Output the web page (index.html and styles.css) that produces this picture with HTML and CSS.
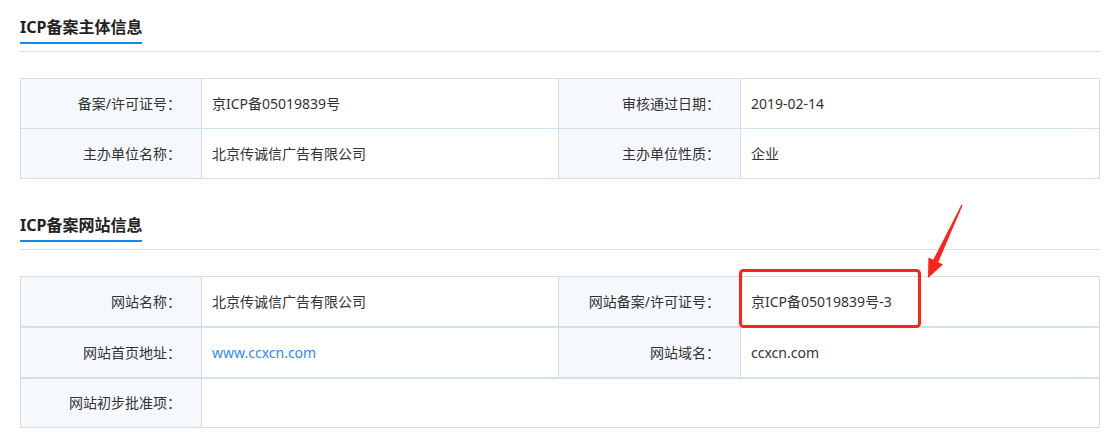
FILE: index.html
```html
<!DOCTYPE html>
<html lang="zh-CN">
<head>
<meta charset="utf-8">
<title>ICP备案信息</title>
<link rel="stylesheet" href="styles.css">
</head>
<body>
<div class="page">
  <section class="section first">
    <div class="sec-head"><h3 class="sec-title">ICP备案主体信息</h3></div>
    <div class="info-table t1">
      <div class="cell label">备案/许可证号：</div>
      <div class="cell value">京ICP备05019839号</div>
      <div class="cell label">审核通过日期：</div>
      <div class="cell value last">2019-02-14</div>
      <div class="cell label">主办单位名称：</div>
      <div class="cell value">北京传诚信广告有限公司</div>
      <div class="cell label">主办单位性质：</div>
      <div class="cell value last">企业</div>
    </div>
  </section>
  <section class="section second">
    <div class="sec-head"><h3 class="sec-title">ICP备案网站信息</h3></div>
    <div class="info-table t2">
      <div class="cell label">网站名称：</div>
      <div class="cell value">北京传诚信广告有限公司</div>
      <div class="cell label">网站备案/许可证号：</div>
      <div class="cell value last">京ICP备05019839号-3</div>
      <div class="cell label">网站首页地址：</div>
      <div class="cell value"><a class="link" href="#">www.ccxcn.com</a></div>
      <div class="cell label">网站域名：</div>
      <div class="cell value last">ccxcn.com</div>
      <div class="cell label end">网站初步批准项：</div>
      <div class="cell value span3 end last"></div>
    </div>
  </section>
</div>
<svg class="annot" width="1113" height="437" viewBox="0 0 1113 437" xmlns="http://www.w3.org/2000/svg">
  <rect x="740.5" y="270.5" width="179" height="56" rx="3" ry="3" fill="none" stroke="#ff2418" stroke-width="3"/>
  <polygon points="961.5,204.6 962.6,205.3 938.2,262.3 943,264.6 928,278 928.4,257.4 933.3,259.8" fill="#ff2418"/>
</svg>
</body>
</html>
```

FILE: styles.css
```css
* { box-sizing: border-box; }
html, body { margin: 0; padding: 0; background: #fff; }
body {
  font-family: "Noto Sans", "Noto Sans CJK SC", sans-serif;
  font-size: 14px;
  color: #333;
  position: relative;
  width: 1113px;
  height: 437px;
  overflow: hidden;
}
.page { padding: 15px 13px 0 20px; }
.section.second { margin-top: 34px; }
.sec-head {
  border-bottom: 1px solid #d6e3ee;
  padding-bottom: 7px;
  margin-bottom: 26px;
}
.sec-title {
  display: inline-block;
  margin: 0;
  font-size: 16px;
  font-weight: bold;
  line-height: 24px;
  color: #222;
  padding-bottom: 3px;
  border-bottom: 2px solid #1589ea;
  font-family: "Noto Sans", "Noto Sans CJK SC", sans-serif;
}
.info-table {
  display: grid;
  grid-template-columns: 181px 357px 182px 1fr;
  border: 1px solid #dcdcdc;
  border-bottom: none;
  width: 1080px;
}
.cell {
  display: flex;
  align-items: center;
  height: 50px;
  border-right: 1px solid #dcdcdc;
  border-bottom: 1px solid #d0e1ef;
  line-height: 20px;
  white-space: nowrap;
}
.cell.last { border-right: none; }
.label {
  background: #f5f9fd;
  justify-content: flex-end;
  padding-right: 20px;
}
.value { padding-left: 10px; }
.t2 .cell { height: 51px; border-bottom-width: 2px; }
.t2 .cell.end { height: 49px; border-bottom: 1px solid #dcdcdc; }
.span3 { grid-column: span 3; }
.link { color: #2f8bf0; text-decoration: none; }
.annot {
  position: absolute;
  left: 0;
  top: 0;
  pointer-events: none;
}
```
